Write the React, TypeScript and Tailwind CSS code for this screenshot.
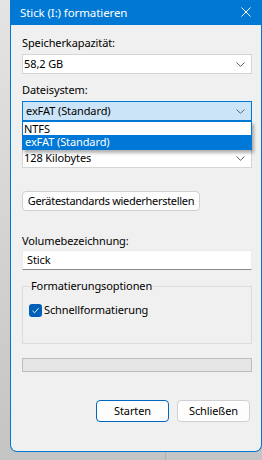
const font = { fontFamily: '"Noto Sans", "Open Sans", sans-serif' };

function Chevron() {
  return (
    <svg width="9" height="5" viewBox="0 0 9 5" className="mt-px">
      <path d="M0.5 0.5 L4.5 4.3 L8.5 0.5" fill="none" stroke="#606060" strokeWidth="1" />
    </svg>
  );
}

function Combo({
  value,
  focused = false,
}: {
  value: string;
  focused?: boolean;
}) {
  return (
    <div
      className={
        focused
          ? "flex h-[20px] items-center justify-between border border-[#0078d4] bg-[#cce4f7] pl-[3px] pr-[6px]"
          : "flex h-[20px] items-center justify-between border border-[#d5d5d5] bg-white pl-[1px] pr-[6px]"
      }
    >
      <span className="leading-[16px]">{value}</span>
      <Chevron />
    </div>
  );
}

export default function App() {
  return (
    <div
      className="relative h-[460px] w-[262px] overflow-hidden bg-gradient-to-b from-[#e4e4e4] to-[#c4c4c4] text-[11px] tracking-[-0.1px] text-black"
      style={font}
    >
      <div className="absolute bottom-0 left-[165px] h-[8px] w-px bg-[#b0b0b0]" />
      <div className="relative ml-[10px] flex h-[452px] w-[252px] flex-col rounded-b-[7px] border-x border-b border-[#0078d4] bg-[#f0f0f0]">
        {/* title bar */}
        <div className="-mx-px flex h-[25px] items-center justify-between bg-[#0078d4] pl-[10px] pr-[11px] text-white">
          <span className="text-[11.5px]">Stick (I:) formatieren</span>
          <svg width="10" height="10" viewBox="0 0 10 10" className="mb-[1px]">
            <path d="M0.5 0.5 L9.5 9.5 M9.5 0.5 L0.5 9.5" stroke="white" strokeWidth="1" />
          </svg>
        </div>

        <div className="relative flex flex-col pl-[11px] pr-[9px]">
          <div className="mt-[10px] h-[16px] leading-[16px]">Speicherkapazität:</div>
          <div className="mt-[3px]">
            <Combo value="58,2 GB" />
          </div>

          <div className="mt-[8px] h-[16px] leading-[16px]">Dateisystem:</div>
          <div className="mt-[3px]">
            <Combo value="exFAT (Standard)" focused />
          </div>

          {/* label of the allocation size lies under the open list */}
          <div className="mt-[8px] h-[16px]" />
          <div className="mt-[3px]">
            <Combo value="128 Kilobytes" />
          </div>

          <div className="mt-[23px] flex">
            <button className="h-[20px] w-[178px] whitespace-nowrap rounded-[4px] border border-[#d0d0d0] bg-[#fdfdfd] text-center leading-[18px] tracking-[-0.3px]">
              Gerätestandards wiederherstellen
            </button>
          </div>

          <div className="mt-[22px] h-[16px] leading-[16px]">Volumebezeichnung:</div>
          <div className="mt-px flex h-[20px] items-center border border-[#ececec] border-b-[#8a8a8a] bg-white pl-[4px]">
            Stick
          </div>

          <div className="relative mt-[16px] h-[58px] border border-[#dcdcdc]">
            <span className="absolute -top-[9px] left-[7px] bg-[#f0f0f0] px-px leading-[16px]">
              Formatierungsoptionen
            </span>
            <div className="mt-[15px] flex items-center pl-[6px]">
              <div className="flex h-[13px] w-[13px] items-center justify-center rounded-[3px] bg-[#005fb8]">
                <svg width="9" height="9" viewBox="0 0 9 9">
                  <path d="M1.5 4.8 L3.6 6.8 L7.6 2.2" fill="none" stroke="white" strokeWidth="0.9" />
                </svg>
              </div>
              <span className="ml-[2px] leading-[16px]">Schnellformatierung</span>
            </div>
          </div>

          <div className="mt-[14px] h-[14px] border border-[#bcbcbc] bg-[#e6e6e6]" />

          <div className="mt-[28px] mr-[2px] flex justify-end gap-[8px]">
            <button className="h-[22px] w-[73px] rounded-[4px] border border-[#0067c0] bg-[#fdfdfd] leading-[20px]">
              Starten
            </button>
            <button className="h-[22px] w-[73px] rounded-[4px] border border-[#d0d0d0] bg-[#fdfdfd] leading-[20px]">
              Schließen
            </button>
          </div>

          {/* open dropdown list */}
          <div className="absolute left-[11px] right-[9px] top-[96px] border border-[#0078d4] bg-white shadow-[2px_3px_3px_rgba(0,0,0,0.3)]">
            <div className="h-[13px] pl-px leading-[13px]">NTFS</div>
            <div className="h-[14px] bg-[#0078d7] pl-[2px] leading-[14px] text-white">exFAT (Standard)</div>
          </div>
        </div>
      </div>
    </div>
  );
}
